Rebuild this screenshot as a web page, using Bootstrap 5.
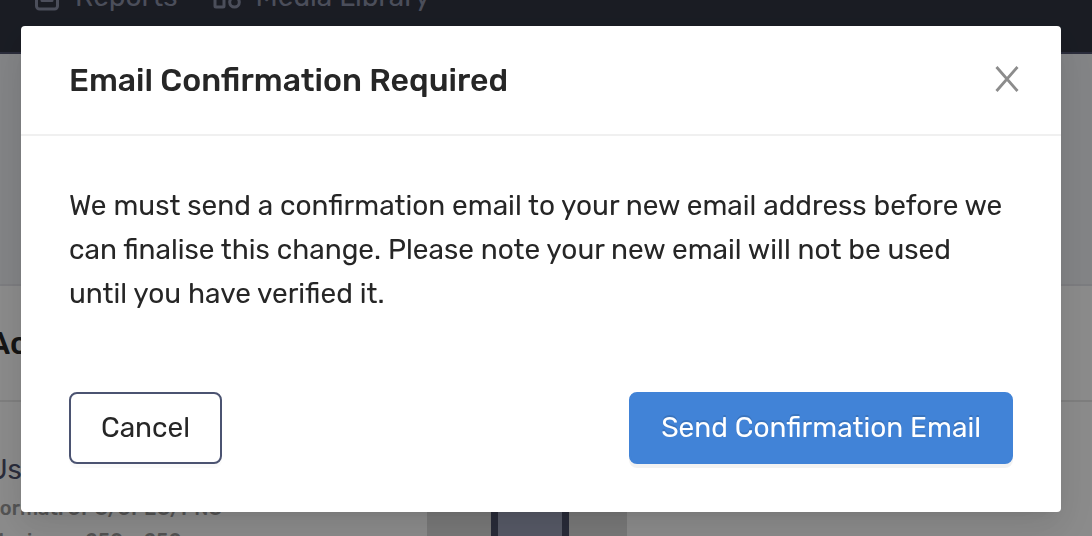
<!DOCTYPE html>
<html lang="en">
<head>
<meta charset="utf-8">
<meta name="viewport" content="width=device-width, initial-scale=1">
<title>Email Confirmation Required</title>
<link href="https://cdn.jsdelivr.net/npm/bootstrap@5.3.0/dist/css/bootstrap.min.css" rel="stylesheet">
<style>
  body { font-family: Rubik, Roboto, "Liberation Sans", sans-serif; font-size: 28px; line-height: 44px; color: #262626; background: #fff; }
  .app { height: 100vh; overflow: hidden; }
  .topbar { height: 112px; margin-top: -58px; padding: 0 34px; gap: 36px; background: #303441; border-bottom: 2px solid #4e526d; }
  .topbar a { gap: 14px; color: #8a8fa6; }
  .hero { height: 232px; background: #f0f2f5; border-bottom: 2px solid #e4e5ea; }
  .section-title { padding: 35px 0; border-bottom: 2px solid #e8e8e8; }
  .section-title h2 { margin: 0 0 0 -12px; font-size: 32px; line-height: 44px; font-weight: 500; }
  .field-col { width: 439px; margin-left: -12px; padding-top: 46px; }
  .field-col label { color: #4e526d; line-height: 44px; }
  .field-col small { font-size: 20px; line-height: 33px; font-weight: 500; color: #999; }
  .avatar-box { width: 200px; height: 200px; padding: 0 58px 0 64px; background: #dcdcdc; }
  .avatar-shape { height: 100%; background: #9ea3bb; border: solid #4b4f68; border-width: 0 7px; }
  .shade { background: rgba(0, 0, 0, .45); }
  .confirm-dialog { max-width: none; margin: 26px 31px 26px 21px; }
  .confirm-dialog .modal-content { border: 0; border-radius: 4px; box-shadow: 0 6px 12px -8px rgba(0, 0, 0, .12), 0 12px 32px rgba(0, 0, 0, .08), 0 18px 56px 16px rgba(0, 0, 0, .05); color: #262626; }
  .confirm-dialog .modal-header { padding: 32px 40px 32px 48px; border-bottom: 2px solid #f0f0f0; border-radius: 4px 4px 0 0; }
  .confirm-dialog .modal-title { font-size: 32px; line-height: 44px; font-weight: 500; }
  .confirm-dialog .modal-body { padding: 48px; }
  .confirm-dialog .modal-footer { padding: 28px 48px 48px; }
  .close-x { width: 28px; height: 28px; color: #8c8c8c; }
  .action { height: 72px; padding: 0 30px; font-size: 28px; line-height: 44px; border-width: 2px; border-radius: 8px; }
  .action-cancel, .action-cancel:hover { color: #262626; background: #fff; border-color: #4b5371; box-shadow: 0 4px 0 rgba(0, 0, 0, .02); }
  .action-send, .action-send:hover { color: #fff; background: #4183d7; border-color: #4183d7; box-shadow: 0 4px 0 rgba(0, 0, 0, .05); text-shadow: 0 -2px 0 rgba(0, 0, 0, .12); }
</style>
</head>
<body>
<div class="app">
  <nav class="topbar d-flex align-items-center">
    <a href="#" class="d-flex align-items-center text-decoration-none">
      <svg width="27" height="28" viewBox="0 0 27 28" fill="none" stroke="currentColor" stroke-width="3"><rect x="2.500" y="2.500" width="21" height="23.500" rx="3"/><path d="M8 9h10M8 17.500h10" stroke-linecap="round"/></svg>
      <span>Reports</span>
    </a>
    <a href="#" class="d-flex align-items-center text-decoration-none">
      <svg width="28" height="28" viewBox="0 0 28 28" fill="none" stroke="currentColor" stroke-width="3"><rect x="2" y="1" width="9" height="9" rx="1"/><rect x="17" y="1" width="9" height="9" rx="1"/><rect x="2" y="14.500" width="9" height="9.500" rx="1"/><circle cx="21.500" cy="19.300" r="4.800"/></svg>
      <span>Media Library</span>
    </a>
  </nav>
  <main>
    <div class="hero"></div>
    <div class="section-title"><h2>Account</h2></div>
    <div class="d-flex">
      <div class="field-col d-flex flex-column">
        <label for="picture">User picture</label>
        <small>Format: JPG/JPEG/PNG</small>
        <small>Maximum 250 x 250</small>
      </div>
      <button type="button" class="avatar-box border-0" id="picture" aria-label="Change picture"><span class="avatar-shape d-block"></span></button>
    </div>
  </main>
</div>

<div class="modal show d-block shade" tabindex="-1" role="dialog" aria-modal="true" aria-labelledby="confirmTitle">
  <div class="modal-dialog confirm-dialog">
    <div class="modal-content">
      <div class="modal-header d-flex justify-content-between align-items-center">
        <h1 class="modal-title" id="confirmTitle">Email Confirmation Required</h1>
        <button type="button" class="close-x btn p-0 border-0 d-flex" aria-label="Close">
          <svg width="28" height="28" viewBox="0 0 28 28" fill="none" stroke="currentColor" stroke-width="2.800"><path d="M3.500 1L24.500 25M24.500 1L3.500 25"/></svg>
        </button>
      </div>
      <div class="modal-body">
        <p class="m-0">We must send a confirmation email to your new email address before we can finalise this change. Please note your new email will not be used until you have verified it.</p>
      </div>
      <div class="modal-footer d-flex justify-content-between border-0">
        <button type="button" class="btn action action-cancel m-0">Cancel</button>
        <button type="button" class="btn action action-send m-0">Send Confirmation Email</button>
      </div>
    </div>
  </div>
</div>
<script src="https://cdn.jsdelivr.net/npm/bootstrap@5.3.0/dist/js/bootstrap.bundle.min.js"></script>
</body>
</html>
